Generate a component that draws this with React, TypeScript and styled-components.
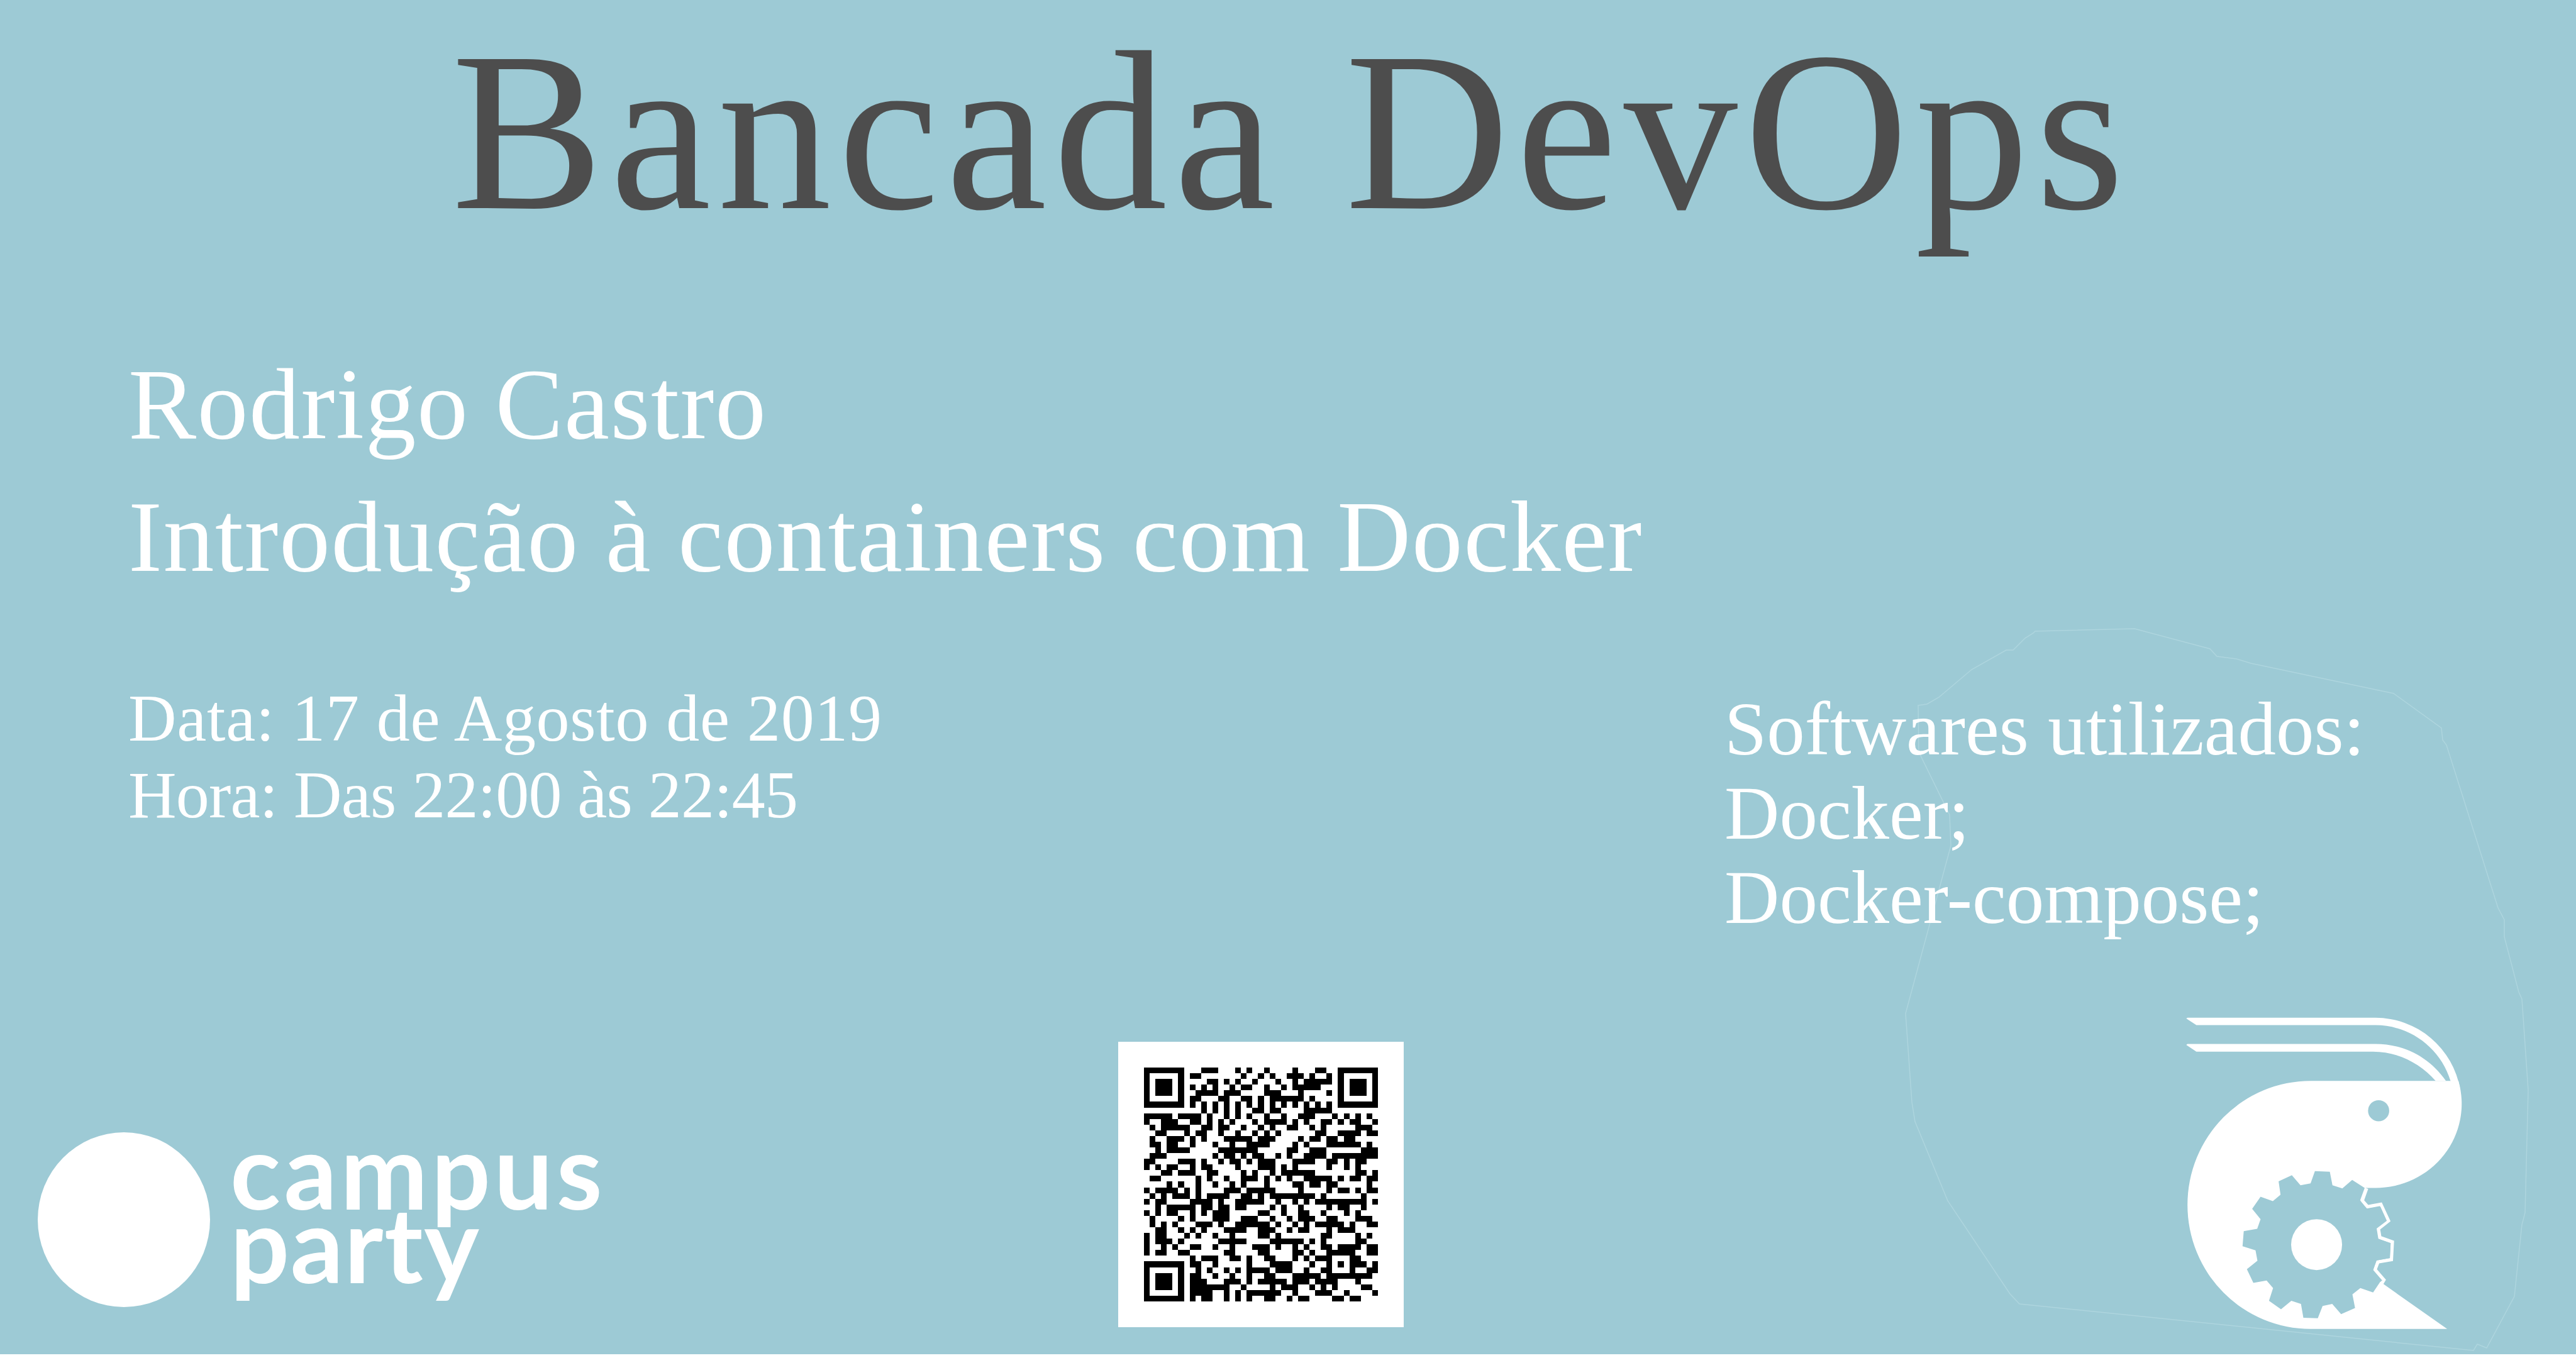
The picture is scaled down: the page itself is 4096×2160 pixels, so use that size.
import styled, { createGlobalStyle } from 'styled-components';

const BG = '#9dcad5';

const GlobalStyle = createGlobalStyle`
  html, body {
    margin: 0;
    padding: 0;
    background: #fff;
  }
`;

// QR modules, one string per row: "from-to" column runs (finder patterns are added in code)
const QR_ROWS = [
  '10-12 16 18 21 26 30-31',
  '8-9 17 20 22 25-27 29 32',
  '11-12 14 16 19 23 26 28-32',
  '8 10 12 15 17-18 21 24 26-30',
  '9-12 14-16 21-23 27 32',
  '8-9 13-14 17-18 20 22-27 29',
  '8 10 12 14 16 18 20 22 24 26 28 30 32',
  '10 12 14 16 19-20 22-23 28-32',
  '0-4 6-9 11 14 16 18 21 24 27-29 33 35 37 39',
  '0 3-5 8-9 11 13 15 19 21-24 26 28 31-32 34 36-37 40',
  '1 3-7 10-11 13-14 17 20 22 25-26 29 31 37-39',
  '2-3 7 9-10 13 16 19 21 23 30-31 34-37 39-40',
  '1 4-6 8 10 14-18 20-22 27 29-30 32-33 35-36',
  '1-2 4-5 8 12 15 18-21 26 28 32-37 39',
  '2 4-7 13-19 25-26 29-31 38-40',
  '1-3 12 14-15 17 19-20 23 25 28-31 33-40',
  '0-1 6-8 10 13 15-16 18 20-22 26-29 32-33 35 37-38',
  '0 2 4-5 8 10-11 16 20-22 24 26 32 35 37',
  '3-4 6-8 11-12 17 19 22 24-29 37-38 40',
  '1-2 9 11 14 17-19 21 23 25 28-32 34 36-37 39-40',
  '4 6 9 12 15 17 21 26-27 29-30 32-33 39',
  '0 2-5 7 9 14-16 18-22 27 32 34-35 37 39-40',
  '1 3 5-7 9 11-14 17-18 20 22-29 31 38',
  '0 2-3 8-11 13 16-20 23 26 28 30-38 40',
  '2 4-8 10-11 13-14 16-17 22 24 27 32 34-35 38',
  '0 2 4-5 8 10 12-14 20-21 24 27-28 31 35 37',
  '1 6 8 12-14 17-19 22 25 27-29 32-33 37-39',
  '1 3 5 9-11 13 16-21 23 26 28 30-34 36 39-40',
  '2-3 6 8 10 14-17 20-22 25 27-28 32 34-36',
  '0 2-3 7 9 12 15 20-21 23 31-32 37 39',
  '0 2-4 6 13-17 22-27 29 31 37-38',
  '0 3 5 8-9 12 15 19-21 23 26 28 31-32 34-37 39-40',
  '0 2-3 6-7 14-15 20-21 26-27 29 32-36 39-40',
  '8 10-12 15-16 18 21-22 26 28 30-32 36-37',
  '8-9 12 18 22-25 29 32 34 36-38 40',
  '9 11 14 16 18-21 23-25 28 31-32 36 39-40',
  '8-9 12 15 18 21-22 26-30 32-39',
  '8-10 14-16 18 20-24 26-28 30-33 37',
  '8-14 17 22 24-26 29 31 33 38-39',
  '8-11 14 16 18-23 26 30-32 35 40',
  '8 10-11 14 16 18 21-22 25 27-28 33-34 36-37',
];

const finder = (x: number, y: number) =>
  `M${x} ${y}h7v7h-7zM${x + 1} ${y + 1}v5h5v-5zM${x + 2} ${y + 2}h3v3h-3z`;

const qrPath =
  QR_ROWS.map((row, y) =>
    row
      .split(' ')
      .map(run => {
        const [from, to = from] = run.split('-').map(Number);
        return `M${from} ${y}h${to - from + 1}v1h-${to - from + 1}z`;
      })
      .join(''),
  ).join('') +
  finder(0, 0) +
  finder(34, 0) +
  finder(0, 34);

const OUTLINE =
  '3394,1000 3514,1032 3525,1044 3556,1048 3579,1055 3806,1103 3882,1158 3884,1177 3890,1185 3972,1444 3982,1463 3982,1490 4005,1578 4010,1589 4020,1734 4015,1929 4010,1948 3998,2062 3954,2144 3939,2138 3933,2148 3211,2074 3196,2058 3097,1910 3045,1784 3040,1753 3030,1612 3102,1345 3100,1296 3051,1196 3050,1122 3064,1120 3083,1109 3135,1065 3190,1034 3201,1034 3220,1015 3233,1007 3236,1004';

const GEAR =
  '788,790 850,793 861,849 902,862 943,827 995,860 976,912 1003,947 1060,937 1087,997 1043,1030 1050,1072 1103,1090 1100,1152 1043,1162 1030,1202 1065,1243 1030,1295 977,1277 944,1303 955,1360 897,1385 860,1343 820,1351 800,1402 740,1400 730,1343 690,1330 647,1365 597,1330 614,1277 587,1245 532,1255 505,1198 549,1163 541,1120 487,1103 492,1040 548,1030 562,990 527,947 562,897 613,915 645,888 637,833 692,807 728,849 770,841';

const GEAR_RIM =
  '1003,862 985,913 1007,938 1062,928 1094,997 1052,1030 1058,1066 1110,1085 1106,1158 1050,1168 1038,1200 1075,1243 1060,1268';

function ShrimpLogo() {
  return (
    <ShrimpSvg viewBox="250 150 1150 1300">
      <path
        fill="#fff"
        d="M253 155L258 152H1040A358 358 0 0 1 1392 450L1352 415C1310 275 1180 183 1040 183H295Z"
      />
      <path
        fill="#fff"
        d="M253 265L258 261H1040C1150 261 1260 310 1333 415H1290C1225 340 1130 293 1030 293H295Z"
      />
      <path
        fill="#fff"
        d="M770 415H1385A358 350 0 0 1 1040 860H1000L900 1100L1070 1258L1338 1447H770A512 516 0 0 1 770 415Z"
      />
      <polyline points={GEAR_RIM} fill="none" stroke="#fff" strokeWidth="14" />
      <polygon points={GEAR} fill={BG} />
      <circle cx="1053" cy="539" r="44" fill={BG} />
      <circle cx="795" cy="1096" r="106" fill="#fff" />
    </ShrimpSvg>
  );
}

export default function App() {
  return (
    <Poster>
      <GlobalStyle />
      <OutlineSvg viewBox="0 0 4096 2160">
        <polygon points={OUTLINE} fill="none" stroke="#aed5de" strokeWidth="1.5" />
      </OutlineSvg>
      <Title>Bancada DevOps</Title>
      <Talk>
        <Speaker>Rodrigo Castro</Speaker>
        <Speaker>Introdução à containers com Docker</Speaker>
      </Talk>
      <Details>
        <Schedule>
          <ScheduleLine $spacing={0.7}>Data: 17 de Agosto de 2019</ScheduleLine>
          <ScheduleLine $spacing={-0.8}>Hora: Das 22:00 às 22:45</ScheduleLine>
        </Schedule>
        <Software>
          <div>Softwares utilizados:</div>
          <div>Docker;</div>
          <div>Docker-compose;</div>
        </Software>
      </Details>
      <Footer>
        <CampusLogo>
          <Dot />
          <Wordmark>
            <Word $spacing={5.5}>campus</Word>
            <Word $spacing={1.5}>party</Word>
          </Wordmark>
        </CampusLogo>
        <QrBox>
          <svg viewBox="0 0 41 41" width="372" height="372" shapeRendering="crispEdges">
            <path d={qrPath} fill="#000" fillRule="evenodd" />
          </svg>
        </QrBox>
        <ShrimpBox>
          <ShrimpLogo />
        </ShrimpBox>
      </Footer>
    </Poster>
  );
}

const Poster = styled.div`
  position: relative;
  display: flex;
  flex-direction: column;
  width: 4096px;
  height: 2154px;
  overflow: hidden;
  background: ${BG};
  font-family: 'Liberation Serif', serif;
  color: #fff;
`;

const OutlineSvg = styled.svg`
  position: absolute;
  left: 0;
  top: 0;
  width: 4096px;
  height: 2160px;
`;

const Title = styled.h1`
  position: relative;
  flex: none;
  margin: 0;
  height: 537px;
  padding: 9px 0 0 10px;
  box-sizing: border-box;
  font-size: 362px;
  font-weight: 400;
  line-height: 400px;
  letter-spacing: 10.5px;
  text-align: center;
  color: #4d4d4d;
`;

const Talk = styled.div`
  position: relative;
  flex: none;
  padding-left: 204px;
`;

const Speaker = styled.div`
  height: 211px;
  font-size: 162px;
  line-height: 211px;
  letter-spacing: 1.5px;
`;

const Details = styled.div`
  position: relative;
  flex: none;
  display: flex;
  justify-content: space-between;
  align-items: flex-start;
  box-sizing: border-box;
  height: 659px;
  padding-left: 204px;
`;

const Schedule = styled.div`
  padding-top: 123px;
  font-size: 106px;
  line-height: 122px;
`;

const ScheduleLine = styled.div<{ $spacing: number }>`
  letter-spacing: ${props => props.$spacing}px;
`;

const Software = styled.div`
  width: 1354px;
  padding-top: 133px;
  font-size: 121px;
  line-height: 134px;
`;

const Footer = styled.div`
  position: relative;
  display: grid;
  grid-template-columns: 1778px 454px 1fr;
  flex: 1;
`;

const CampusLogo = styled.div`
  display: flex;
  align-items: flex-start;
  gap: 32px;
  padding: 183px 0 0 60px;
`;

const Dot = styled.div`
  flex: none;
  width: 274px;
  height: 278px;
  border-radius: 50%;
  background: #fff;
`;

const Wordmark = styled.div`
  font-family: Lato, sans-serif;
  font-weight: 700;
  font-size: 166px;
  line-height: 117px;
`;

const Word = styled.div<{ $spacing: number }>`
  letter-spacing: ${props => props.$spacing}px;
`;

const QrBox = styled.div`
  display: flex;
  align-items: center;
  justify-content: center;
  height: 454px;
  margin-top: 39px;
  background: #fff;
`;

const ShrimpBox = styled.div`
  padding-left: 1243px;
`;

const ShrimpSvg = styled.svg`
  display: block;
  width: 440px;
  height: 497px;
`;
